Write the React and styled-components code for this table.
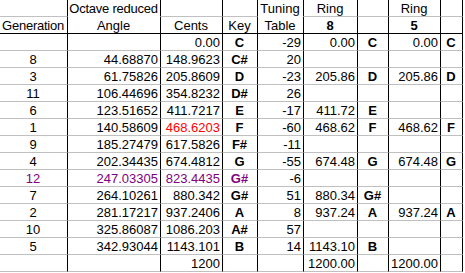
import React from "react";
import styled, { createGlobalStyle } from "styled-components";

const Global = createGlobalStyle`
  html, body { margin: 0; padding: 0; background: #fff; }
  body { font-family: "Liberation Sans", Arial, sans-serif; }
`;

const Sheet = styled.div`
  display: grid;
  grid-template-columns: 68px 93px 62px 35px 46px 54px 31px 52px 22px;
  grid-auto-rows: 17px;
  width: 465px;
  font-size: 13px;
  color: #000;
`;

const Cell = styled.div`
  box-sizing: border-box;
  border-right: 1px solid #000;
  border-bottom: 1px solid ${(p) => (p.$bottom === "dark" ? "#000" : p.$bottom === "none" ? "transparent" : "#c0c0c0")};
  line-height: 16px;
  padding: 1px 2px 0 1px;
  text-align: ${(p) => p.$align || "right"};
  font-weight: ${(p) => (p.$bold ? 700 : 400)};
  color: ${(p) => p.$color || "#000"};
  letter-spacing: ${(p) => (p.$tight ? "-0.25px" : "0")};
  white-space: nowrap;
  overflow: visible;
`;

const aligns = ["center", "right", "right", "center", "right", "right", "center", "right", "center"];
const bolds = [false, false, false, true, false, false, true, false, true];

const RED = "#ff0000";
const PURPLE = "#800080";

const header1 = ["", "Octave reduced", "", "", "Tuning", "Ring", "", "Ring", ""];
const header2 = ["Generation", "Angle", "Cents", "Key", "Table", "8", "", "5", ""];

const rows = [
  ["", "", "0.00", "C", "-29", "0.00", "C", "0.00", "C"],
  ["8", "44.68870", "148.9623", "C#", "20", "", "", "", ""],
  ["3", "61.75826", "205.8609", "D", "-23", "205.86", "D", "205.86", "D"],
  ["11", "106.44696", "354.8232", "D#", "26", "", "", "", ""],
  ["6", "123.51652", "411.7217", "E", "-17", "411.72", "E", "", ""],
  ["1", "140.58609", { v: "468.6203", c: RED }, "F", "-60", "468.62", "F", "468.62", "F"],
  ["9", "185.27479", "617.5826", "F#", "-11", "", "", "", ""],
  ["4", "202.34435", "674.4812", "G", "-55", "674.48", "G", "674.48", "G"],
  [
    { v: "12", c: PURPLE },
    { v: "247.03305", c: PURPLE },
    { v: "823.4435", c: PURPLE },
    { v: "G#", c: PURPLE },
    "-6",
    "",
    "",
    "",
    "",
  ],
  ["7", "264.10261", "880.342", "G#", "51", "880.34", "G#", "", ""],
  ["2", "281.17217", "937.2406", "A", "8", "937.24", "A", "937.24", "A"],
  ["10", "325.86087", "1086.203", "A#", "57", "", "", "", ""],
  ["5", "342.93044", "1143.101", "B", "14", "1143.10", "B", "", ""],
  ["", "", "1200", "", "", "1200.00", "", "1200.00", ""],
];

export default function App() {
  return (
    <>
      <Global />
      <Sheet>
        {header1.map((t, i) => (
          <Cell key={"h1" + i} $align="center" $tight={i === 1} $bottom={i === 1 || i === 4 ? "none" : "grid"}>
            {t}
          </Cell>
        ))}
        {header2.map((t, i) => (
          <Cell key={"h2" + i} $align="center" $tight={i === 0} $bold={i === 5 || i === 7} $bottom="dark">
            {t}
          </Cell>
        ))}
        {rows.map((r, ri) =>
          r.map((c, ci) => {
            const val = typeof c === "object" ? c.v : c;
            const color = typeof c === "object" ? c.c : undefined;
            return (
              <Cell key={ri + "-" + ci} $align={aligns[ci]} $bold={bolds[ci]} $color={color}>
                {val}
              </Cell>
            );
          })
        )}
      </Sheet>
    </>
  );
}
